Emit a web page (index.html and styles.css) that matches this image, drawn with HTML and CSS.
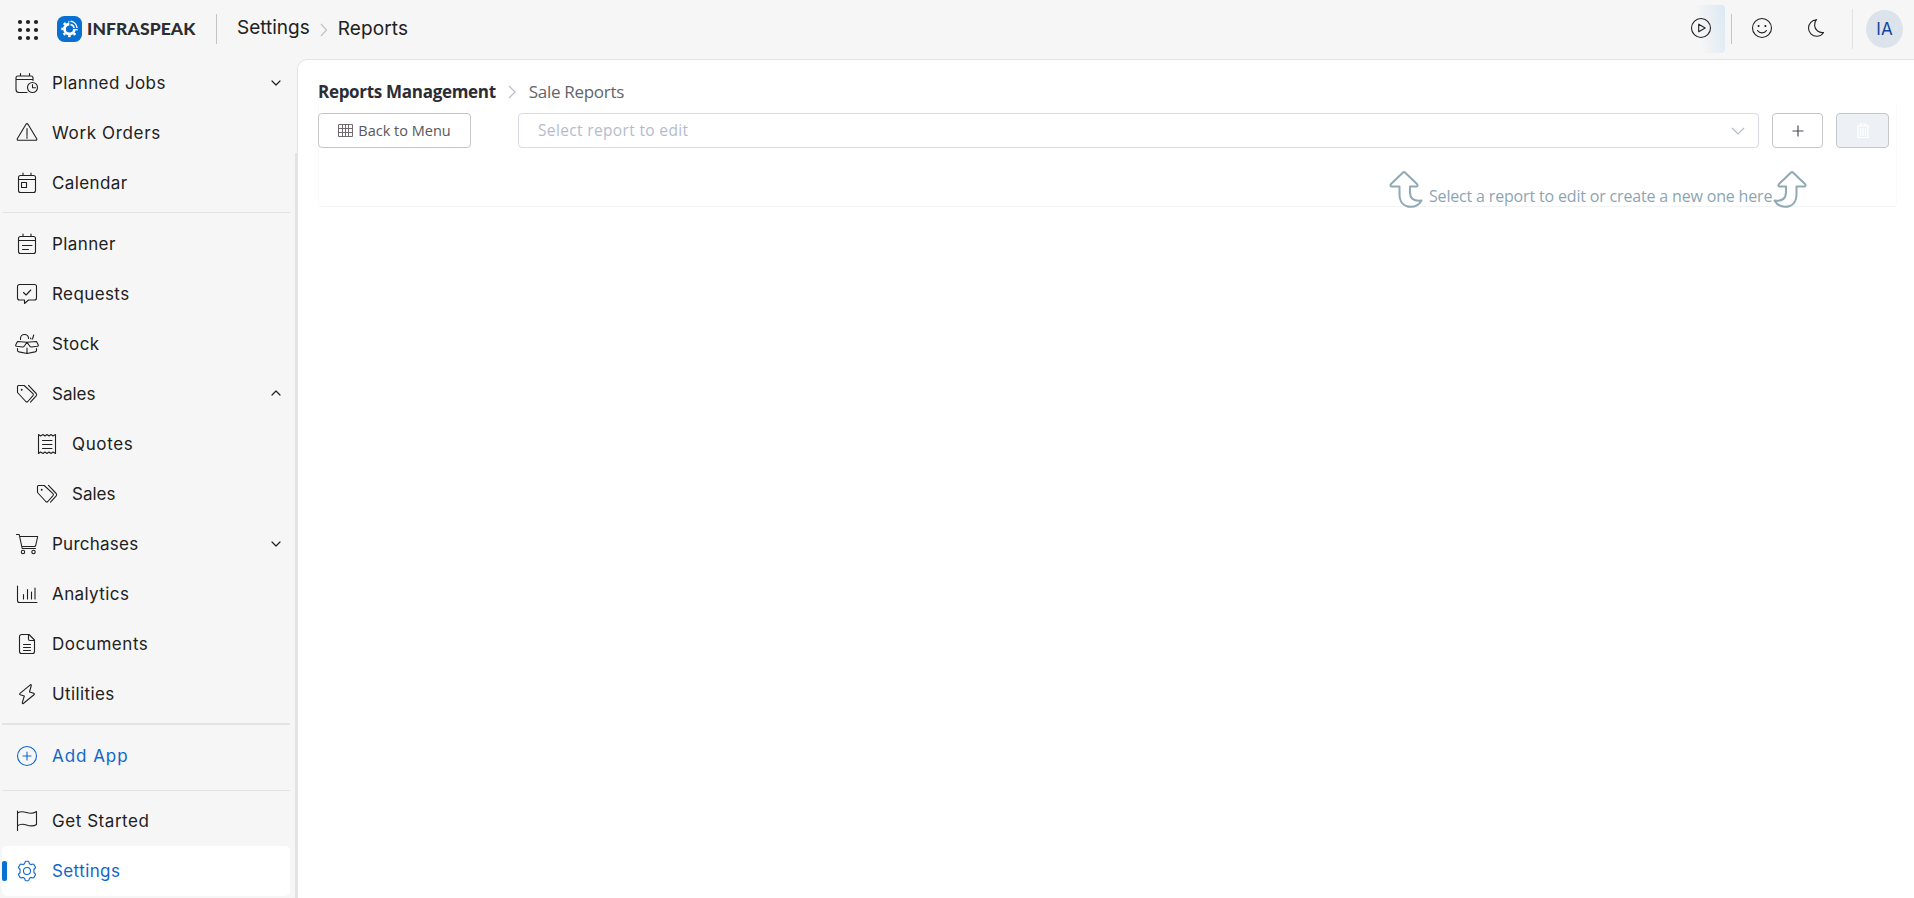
FILE: index.html
```html
<!DOCTYPE html>
<html lang="en">
<head>
<meta charset="utf-8">
<title>Reports - Infraspeak</title>
<link rel="stylesheet" href="styles.css">
</head>
<body>
<header class="topbar">
  <div class="brand">
    <svg class="apps" width="22" height="22" viewBox="0 0 22 22"><g fill="#212121"><circle cx="3" cy="3" r="2.1"/><circle cx="11" cy="3" r="2.1"/><circle cx="19" cy="3" r="2.1"/><circle cx="3" cy="11" r="2.1"/><circle cx="11" cy="11" r="2.1"/><circle cx="19" cy="11" r="2.1"/><circle cx="3" cy="19" r="2.1"/><circle cx="11" cy="19" r="2.1"/><circle cx="19" cy="19" r="2.1"/></g></svg>
    <svg class="logo" width="25" height="26" viewBox="0 0 25 26"><rect width="25" height="26" rx="7.5" fill="#0770d1"/><circle cx="12.5" cy="13" r="7.200" fill="none" stroke="#fff" stroke-width="2" stroke-dasharray="2.600 3.055" stroke-dashoffset="1.300"/><circle cx="12.5" cy="13" r="5" fill="none" stroke="#fff" stroke-width="2.800"/><path d="M12.300 13V3.500H22V13Z" fill="#0770d1"/><path d="M13.500 5.300a7.300 7.300 0 0 1 6.500 6.700M13.500 8.500a4.200 4.200 0 0 1 3.600 3.700" fill="none" stroke="#fff" stroke-width="1.500"/></svg>
    <span class="brand-name">INFRASPEAK</span>
  </div>
  <nav class="crumbs">
    <span>Settings</span>
    <svg width="8" height="14" viewBox="0 0 8 14"><path d="M1 1l5.500 6L1 13" fill="none" stroke="#c2c4c8" stroke-width="1.300"/></svg>
    <span class="crumb-last">Reports</span>
  </nav>
  <div class="tools">
    <span class="play"><svg class="ico" width="24" height="24" viewBox="0 0 24 24"><circle cx="12" cy="12" r="9.500"/><path d="M9.700 8.200v7.600l6.500-3.800z"/></svg></span>
    <span class="rule rule-dark"></span>
    <svg class="ico smile" width="24" height="24" viewBox="0 0 24 24"><circle cx="12" cy="12" r="9.500"/><path d="M7.500 14.500c2 3.200 7 3.200 9 0"/><circle cx="8.600" cy="10" r=".5" fill="#212121"/><circle cx="15.400" cy="10" r=".5" fill="#212121"/></svg>
    <svg class="ico moon" width="24" height="24" viewBox="0 0 24 24"><path d="M12.500 3.700C8 4 4.500 7.600 4.500 12c0 4.700 3.700 8.300 8.200 8.300 3 0 5.500-1.500 6.800-3.800-4.300.6-8.500-2.300-8.900-6.900-.2-2.300.5-4.400 1.900-5.900z"/></svg>
    <span class="rule rule-light"></span>
    <span class="avatar">IA</span>
  </div>
</header>
<div class="body">
  <aside class="sidebar">
    <a class="item"><svg class="ico" width="24" height="24" viewBox="0 0 24 24"><path d="M12 21.500H4a3 3 0 0 1-3-3V7a2 2 0 0 1 2-2h13a2 2 0 0 1 2 2v2.500M1 8.500h17M5.500 2.500V5M14.500 2.500V5"/><circle cx="17.500" cy="16.500" r="5"/><path d="M17.500 13.500v3.200h3"/></svg><span class="label">Planned Jobs</span><svg class="ico chev" width="10" height="6" viewBox="0 0 10 6"><path d="M1 1l4 4 4-4"/></svg></a>
    <a class="item"><svg class="ico" width="24" height="24" viewBox="0 0 24 24"><path d="M11 3.300q1-1.300 2 0l8.700 14.400q.5 1.500-1 1.500H3.300q-1.500 0-1-1.500zM12 7.500v7M12 15.500v1.800"/></svg><span class="label loose">Work Orders</span></a>
    <a class="item"><svg class="ico" width="24" height="24" viewBox="0 0 24 24"><rect x="3.500" y="4.500" width="17" height="17" rx="2"/><path d="M3.500 8.500h17M8 2v2.500M16 2v2.500"/><rect x="6.500" y="11.500" width="5" height="5"/></svg><span class="label">Calendar</span></a>
    <hr class="split">
    <a class="item"><svg class="ico" width="24" height="24" viewBox="0 0 24 24"><rect x="3.500" y="4.500" width="17" height="17" rx="2"/><path d="M3.500 8.500h17M8 2v2.500M16 2v2.500M7.500 13.500h9.500M7.500 17.500h6"/></svg><span class="label">Planner</span></a>
    <a class="item"><svg class="ico" width="24" height="24" viewBox="0 0 24 24"><path d="M9.500 21.500v-3.500h-5a2 2 0 0 1-2-2V4.500a2 2 0 0 1 2-2h15a2 2 0 0 1 2 2V16a2 2 0 0 1-2 2h-6z"/><path d="M8.500 10.500l2.600 2.500 4.700-5"/></svg><span class="label">Requests</span></a>
    <a class="item"><svg class="ico" width="24" height="24" viewBox="0 0 24 24"><path d="M12 10.200L2.500 9.500 .7 13q-.2 1 1 1.200l6 .8q1 0 1.500-.7L12 10.200l2.800 4.100q.5.700 1.500.7l6-.8q1.200-.2 1-1.200l-1.800-3.500zM2.500 16.500v2q0 1 1.500 1.400l8 1.600 8-1.600q1.500-.4 1.500-1.400v-2M12 16v5.500M5.500 7.500V6.500C5.500 4 7 2.500 9.500 2.500s4 1.500 4 4M18.700 3l-1.200 4M15.500 6l.5 1"/></svg><span class="label">Stock</span></a>
    <a class="item"><svg class="ico" width="24" height="24" viewBox="0 0 24 24"><path d="M2.500 10.500V4.500q0-1 1-1h5.700l8.800 8.200q.8 1 0 2l-5.200 5.800q-1 1-2 0zM13.500 3.300l7.700 8.200q.9 1.200 0 2.300l-5.700 6.400"/><circle cx="6.700" cy="7.700" r=".4" fill="#212121"/></svg><span class="label tight">Sales</span><svg class="ico chev up" width="10" height="6" viewBox="0 0 10 6"><path d="M1 5l4-4 4 4"/></svg></a>
    <a class="item sub"><svg class="ico" width="24" height="24" viewBox="0 0 24 24"><path d="M3.500 2.500l2 1.500L8 2.500l2 1.500 2-1.500L14 4l2-1.500L18 4l2.500-1.500v19L18 20l-2 1.500-2-1.500-2 1.500-2-1.500-2 1.500L5.500 20l-2 1.500zM7.500 8.500h9.500M7.500 12.500h9.500M7.500 16.500h9.500"/></svg><span class="label loose">Quotes</span></a>
    <a class="item sub"><svg class="ico" width="24" height="24" viewBox="0 0 24 24"><path d="M2.500 10.500V4.500q0-1 1-1h5.700l8.800 8.200q.8 1 0 2l-5.200 5.800q-1 1-2 0zM13.500 3.300l7.700 8.200q.9 1.200 0 2.300l-5.700 6.400"/><circle cx="6.700" cy="7.700" r=".4" fill="#212121"/></svg><span class="label tight">Sales</span></a>
    <a class="item"><svg class="ico" width="24" height="24" viewBox="0 0 24 24"><path d="M1.500 2.500h2.700l3 14h13.300M4.800 4.500h17.900l-2 9q-.3 1-1.300 1H6.900"/><circle cx="8" cy="20" r="1.700"/><circle cx="18.500" cy="20" r="1.700"/></svg><span class="label snug">Purchases</span><svg class="ico chev" width="10" height="6" viewBox="0 0 10 6"><path d="M1 1l4 4 4-4"/></svg></a>
    <a class="item"><svg class="ico" width="24" height="24" viewBox="0 0 24 24"><path d="M2.500 4v14.500q0 2 2 2H22M8.500 12.500V17M12.500 7.500V17M16.500 10V17M20 6v11"/></svg><span class="label">Analytics</span></a>
    <a class="item"><svg class="ico" width="24" height="24" viewBox="0 0 24 24"><path d="M14 2.500H6.500a2 2 0 0 0-2 2v15a2 2 0 0 0 2 2h11a2 2 0 0 0 2-2V8zM13.500 2.500V7q0 1.500 1.500 1.500h4.500M8.500 12.500h7M8.500 15.500h7M8.500 18.500h7"/></svg><span class="label easy">Documents</span></a>
    <a class="item"><svg class="ico" width="24" height="24" viewBox="0 0 24 24"><path d="M15.300 2.800L5 11.300q-1 1 .3 1.500l4 1.200-2 6.700q0 1.500 1.300.5L19 12.800q.8-1-.3-1.500L14.500 10l1.800-6.500q0-1.300-1-.7z"/></svg><span class="label">Utilities</span></a>
    <hr class="split thick">
    <a class="item blue"><svg class="ico" width="24" height="24" viewBox="0 0 24 24"><circle cx="12" cy="12" r="9.500"/><path d="M12 8v8M8 12h8"/></svg><span class="label looser">Add App</span></a>
    <hr class="split low">
    <a class="item"><svg class="ico" width="24" height="24" viewBox="0 0 24 24"><path d="M2.500 2v19.500M2.500 4c3-2 6-1.500 9-.5s7 1 10-1v13c-3 2-7 1.500-10 .5s-6-1.300-9 .8"/></svg><span class="label easy">Get Started</span></a>
    <a class="item blue active"><svg class="ico" width="24" height="24" viewBox="0 0 24 24"><path d="M9.600 4.800l.5-2q.2-.6.8-.6h2.200q.6 0 .8.600l.5 2 1.500.8 2-.6q.6-.2.900.4l1.600 2.600q.3.500-.1 1l-1.400 1.500v3l1.400 1.500q.4.500.1 1l-1.600 2.600q-.3.600-.9.400l-2-.6-1.500.8-.5 2q-.2.600-.8.600h-2.200q-.6 0-.8-.600l-.5-2-1.500-.8-2 .6q-.6.200-.9-.4L3.600 16q-.3-.5.100-1l1.400-1.500v-3L3.700 9q-.4-.5-.1-1l1.600-2.600q.3-.6.900-.4l2 .6z"/><circle cx="12" cy="12" r="3.500"/></svg><span class="label">Settings</span></a>
  </aside>
  <div class="scroll"></div>
  <main class="main">
    <div class="title"><b>Reports Management</b><svg width="9" height="14" viewBox="0 0 9 14"><path d="M1 1l6 6-6 6" fill="none" stroke="#b9bfcb" stroke-width="1.200"/></svg><span>Sale Reports</span></div>
    <section class="panel">
      <div class="row">
        <button class="btn back"><svg width="15" height="13" viewBox="0 0 15 13"><path d="M.5.5h14v12H.5zM.5 4.500h14M.5 8.500h14M4.500 .5v12M7.500.5v12M10.500 .5v12" fill="none" stroke="#706a6e"/></svg><span>Back to Menu</span></button>
        <div class="select"><span>Select report to edit</span><svg width="14" height="8" viewBox="0 0 14 8"><path d="M1 1l6 6 6-6" fill="none" stroke="#b4bccc" stroke-width="1.200"/></svg></div>
        <button class="btn plus"><svg width="12" height="12" viewBox="0 0 12 12"><path d="M6 .5v11M.5 6h11" stroke="#4a4d55" stroke-width="1.200"/></svg></button>
        <button class="btn trash"><svg width="14" height="16" viewBox="0 0 14 16"><path d="M1 3h12M4.500 3V1h5v2M2 3.500v11h10v-11M4.500 5v8M7 5v8M9.500 5v8" fill="none" stroke="#fff" stroke-width="1.200"/></svg></button>
      </div>
      <div class="hint">
        <svg class="arrow" width="34" height="38" viewBox="0 0 34 38"><path d="M14 2.500Q15 1.500 16 2.500L28 14Q29.500 16.500 27.500 16.500H21V22C21 28 24 31.500 32.500 30.500Q29 36.800 22 36.800C14 36.800 10.500 31 10.500 24V16.500H3Q.5 16.500 2 14Z"/></svg>
        <span class="hint-text">Select a report to edit or create a new one here</span>
        <svg class="arrow" width="34" height="38" viewBox="0 0 34 38"><g transform="matrix(-1 0 0 1 34 0)"><path d="M14 2.500Q15 1.500 16 2.500L28 14Q29.500 16.500 27.500 16.500H21V22C21 28 24 31.500 32.500 30.500Q29 36.800 22 36.800C14 36.800 10.500 31 10.500 24V16.500H3Q.5 16.500 2 14Z"/></g></svg>
      </div>
    </section>
  </main>
</div>
</body>
</html>
```
FILE: styles.css
```css
* { box-sizing: border-box; }
html, body { height: 100%; }
body { margin: 0; display: flex; flex-direction: column; overflow: hidden; background: #f6f6f6; color: #212121; font-family: Inter, "Liberation Sans", sans-serif; }
svg { flex: none; display: block; }
.ico { fill: none; stroke: #212121; stroke-width: 1.1; stroke-linejoin: round; stroke-linecap: round; }

.topbar { display: flex; align-items: flex-start; height: 58px; flex: none; }
.brand { display: flex; width: 217px; height: 30px; margin-top: 14px; border-right: 1px solid #c2c4c8; align-items: flex-start; }
.apps { margin: 5px 0 0 17px; }
.logo { margin: 2px 0 0 18px; }
.brand-name { margin: 2px 0 0 5px; font: 900 17.5px/26px Lato, sans-serif; letter-spacing: 0.1px; color: #2d2e32; }
.crumbs { display: flex; align-items: center; gap: 10px; height: 30px; margin: 13px 0 0 20px; font-size: 19px; line-height: 30px; }
.crumbs svg { margin-top: 3px; }
.crumb-last { margin-top: 2px; letter-spacing: 0.1px; }
.tools { display: flex; align-items: flex-start; margin-left: auto; padding-right: 11px; }
.play { display: block; width: 40px; height: 48px; margin-top: 5px; padding: 11px 0 0 4px; border-radius: 4px; background: linear-gradient(80deg, rgba(220,232,243,0) 35%, #dce8f3 100%); }
.rule { width: 1px; }
.rule-dark { height: 30px; margin: 14px 0 0 6px; background: #c2c4c8; }
.smile { margin: 16px 0 0 18px; }
.moon { margin: 16px 0 0 30px; }
.rule-light { height: 40px; margin: 9px 0 0 24px; background: #e2e2e2; }
.avatar { width: 37px; height: 38px; margin: 10px 0 0 13px; border-radius: 50%; background: #dde3ea; color: #0d47a1; font-size: 17px; line-height: 38px; text-align: center; }

.body { display: flex; flex: 1; min-height: 0; }
.sidebar { width: 295px; padding-left: 2px; flex: none; }
.item { display: flex; align-items: center; width: 288px; height: 50px; padding-left: 13px; }
.sub { padding-left: 33px; }
.label { margin-left: 13px; padding-top: 1px; font-size: 17px; line-height: 49px; letter-spacing: 0.4px; white-space: nowrap; }
.tight { letter-spacing: 0; }
.snug { letter-spacing: 0.25px; }
.easy { letter-spacing: 0.55px; }
.loose { letter-spacing: 0.65px; }
.looser { letter-spacing: 0.95px; }
.chev { margin: 0 9px 0 auto; stroke-width: 1.2; }
.up { margin-bottom: 3px; }
.split { width: 288px; height: 1px; margin: 4px 0 6px; border: 0; background: #e2e3e4; }
.thick { height: 2px; }
.low { margin: 9px 0 5px; }
.blue { color: #1068c8; }
.blue .ico { stroke: #1068c8; }
.active { background: #fff; border-radius: 5px; padding-left: 0; }
.active::before { content: ""; width: 5px; height: 20px; border-radius: 2px; background: #0770d1; margin-right: 8px; }
.scroll { width: 3px; flex: none; margin: 95px -1px 0 0; background: #e2e3e3; z-index: 1; }

.main { flex: 1; margin-top: 1px; padding: 21px 17px 0 20px; background: #fff; border: 1px solid #e4e4e4; border-width: 1px 0 0 1px; border-radius: 10px 0 0 0; font-family: "Open Sans", "Noto Sans", sans-serif; }
.title { display: flex; align-items: center; gap: 12px; height: 22px; font-size: 17px; line-height: 22px; color: #62656a; }
.title b { color: #2a2d33; letter-spacing: -0.3px; }
.title span { letter-spacing: -0.3px; }
.panel { height: 104px; border: 1px solid #f3f4f4; border-top: 0; border-left-color: #fafafa; border-right-color: #fafafa; border-radius: 0 0 4px 4px; }
.row { display: flex; margin-left: -1px; padding-top: 10px; }
.btn { height: 35px; display: flex; align-items: center; justify-content: center; padding: 0; border: 1px solid #c4c6c9; border-radius: 4px; background: #fff; }
.back { width: 153px; gap: 5px; font: 500 14.5px "Open Sans", sans-serif; color: #56585d; }
.select { display: flex; align-items: center; justify-content: space-between; width: 1241px; height: 35px; margin-left: 47px; padding: 0 13px 0 19px; border: 1px solid #d8dbe5; border-radius: 4px; color: #b4bccc; font-size: 15.5px; line-height: 31px; letter-spacing: 0.35px; }
.plus { width: 51px; margin-left: 13px; }
.trash { width: 53px; margin-left: 13px; background: #edf1f6; }
.hint { display: flex; height: 38px; margin: 22px 0 0 1070px; }
.arrow { fill: none; stroke: #91a8b5; stroke-width: 2; stroke-linejoin: round; }
.hint-text { width: 344px; margin: 14px 0 0 6px; font-size: 16px; line-height: 24px; color: #8ca5b3; white-space: nowrap; letter-spacing: -0.17px; }
```
